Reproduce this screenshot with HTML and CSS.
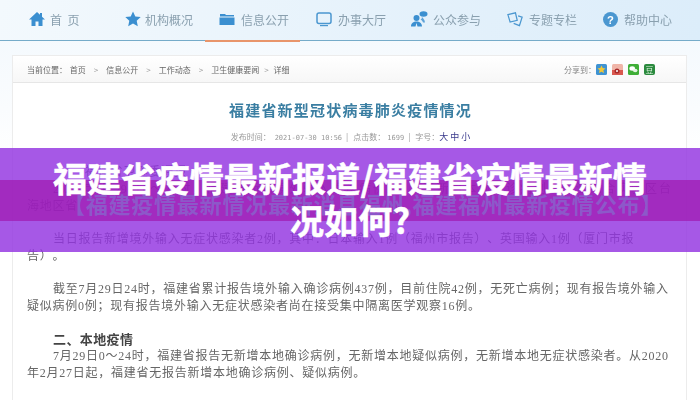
FILE: index.html
```html
<!DOCTYPE html>
<html lang="zh-CN">
<head>
    <meta charset="UTF-8">
    <title>福建省疫情最新报道</title>
    <link rel="stylesheet" href="styles.css">
</head>
<body>
    <div class="page">
        <nav class="nav">
            <a class="nav-item home">
                <svg viewBox="0 0 16 16" width="16" height="16"><path fill="#3b8fd0" d="M8 1 0 8.500h2.500V15h4v-4.500h3V15h4V8.500H16L13 5.700V2h-2v1.800z"/></svg>
                <span>首&nbsp;&nbsp;页</span>
            </a>
            <a class="nav-item org">
                <svg viewBox="0 0 16 16" width="16" height="16"><path fill="#3b8fd0" d="M8 .5l2.300 5 5.400.6-4 3.700 1.100 5.400L8 12.500l-4.800 2.700 1.100-5.400-4-3.700 5.400-.6z"/></svg>
                <span>机构概况</span>
            </a>
            <a class="nav-item info active">
                <svg viewBox="0 0 16 16" width="16" height="16"><path fill="#3b8fd0" d="M1 3h5l1 1h8v1.500H1zM.5 6.500h15v7.500H.5z"/></svg>
                <span>信息公开</span>
            </a>
            <a class="nav-item hall">
                <svg viewBox="0 0 16 16" width="16" height="16"><rect x="1" y="2" width="14" height="10.500" rx="2" fill="none" stroke="#4b97d0" stroke-width="1.500"/><path fill="#4b97d0" d="M4 14h8v1.200H4z"/></svg>
                <span>办事大厅</span>
            </a>
            <a class="nav-item public">
                <svg viewBox="0 0 18 16" width="18" height="16"><circle cx="6.500" cy="7" r="3" fill="#3b8fd0"/><path fill="#3b8fd0" d="M1 15.500c0-3.500 2.500-5 5.500-5s5.500 1.500 5.500 5H7.500L6.500 12l-1 3.500z"/><path fill="#3b8fd0" d="M10.500 8.500c1.500-.5 2-2.500.7-3.500 1 1.500 3.800 3.500 3.800 6.500h-2c-.5-1.500-1.200-2.500-2.500-3z" opacity=".8"/><ellipse cx="13.500" cy="3" rx="4" ry="2.800" fill="#3b8fd0"/></svg>
                <span>公众参与</span>
            </a>
            <a class="nav-item topic">
                <svg viewBox="0 0 18 16" width="16" height="16"><path fill="none" stroke="#4b97d0" stroke-width="1.400" d="M1 3 9.500 1l2 8.500-8 2z"/><path fill="none" stroke="#4b97d0" stroke-width="1.400" d="M12.500 4.500 17 6l-3 9.500-6.500-2.500"/></svg>
                <span>专题专栏</span>
            </a>
            <a class="nav-item help">
                <svg viewBox="0 0 16 16" width="15" height="15"><circle cx="8" cy="8" r="8" fill="#4b97d0"/><text x="8" y="12.500" class="help-mark">?</text></svg>
                <span>帮助中心</span>
            </a>
        </nav>

        <main class="card">
            <div class="crumbs">
                <div class="crumb-path">
                    <span class="crumb-label">当前位置&#65306;</span>
                    <span>首页</span><i>&gt;</i><span>信息公开</span><i>&gt;</i><span>工作动态</span><i>&gt;</i><span>卫生健康要闻</span><i class="tight">&gt;</i><span>详细</span>
                </div>
                <div class="share">
                    <span class="share-label">分享到&#65306;</span>
                    <svg class="share-icon" viewBox="0 0 11 11"><rect width="11" height="11" rx="1.500" fill="#3f93d2"/><path fill="#f2c735" d="M5.500 1.500l1.200 2.600 2.800.3-2.100 1.900.6 2.800-2.500-1.400-2.500 1.400.6-2.800L1.500 4.400l2.800-.3z"/></svg>
                    <svg class="share-icon" viewBox="0 0 11 11"><rect width="11" height="11" rx="1.500" fill="#f0b5a8"/><rect y="6" width="11" height="5" fill="#d9584f"/><circle cx="5" cy="7" r="2.500" fill="#a82a2a"/><circle cx="5" cy="7" r="1" fill="#fff"/></svg>
                    <svg class="share-icon" viewBox="0 0 11 11"><rect width="11" height="11" rx="1.500" fill="#3fae37"/><ellipse cx="4.200" cy="4.500" rx="2.800" ry="2.200" fill="#fff"/><ellipse cx="7.200" cy="6.500" rx="2.300" ry="1.800" fill="#e4f5e2"/></svg>
                    <b class="share-text">豆</b>
                </div>
            </div>
            <article class="article">
                <h1>福建省新型冠状病毒肺炎疫情情况</h1>
                <div class="meta">发布时间&#65306;<span class="num">2021-07-30 10:56</span>|<span class="meta-item">点击数&#65306;</span><span class="num short">1699</span>|<span class="meta-item">字号&#65306;</span><span class="sizes">大 中 小</span></div>
                <p class="lead">福建省卫健委通报</p>
                <p class="wrap">2021年7月29日0&#65374;24时&#65292;福建省新增境外输入确诊病例2例&#65292;无新增本地确诊病例&#65292;平潭综合实验区台</p>
                <p class="cont">海地区省</p>
                <p>当日报告新增境外输入无症状感染者2例&#65292;其中&#65306;日本输入1例&#65288;福州市报告&#65289;、英国输入1例&#65288;厦门市报告&#65289;。</p>
                <p class="gap">截至7月29日24时&#65292;福建省累计报告境外输入确诊病例437例&#65292;目前住院42例&#65292;无死亡病例&#65307;现有报告境外输入疑似病例0例&#65307;现有报告境外输入无症状感染者尚在接受集中隔离医学观察16例。</p>
                <h2>二、本地疫情</h2>
                <p>7月29日0&#65374;24时&#65292;福建省报告无新增本地确诊病例&#65292;无新增本地疑似病例&#65292;无新增本地无症状感染者。从2020年2月27日起&#65292;福建省无报告新增本地确诊病例、疑似病例。</p>
                <h2>&#65288;一&#65289;疫情趋势</h2>
            </article>
        </main>
    </div>

    <div class="banner">
        <div class="banner-band">【福建疫情最新情况最新消息福州,福建福州最新疫情公布】</div>
        <div class="banner-title">福建省疫情最新报道/福建省疫情最新情况如何?</div>
    </div>
</body>
</html>
```

FILE: styles.css
```css
* {
    box-sizing: border-box;
}

html, body {
    margin: 0;
    height: 400px;
    overflow: hidden;
}

body {
    position: relative;
    width: 700px;
    background: #fff;
}

.page {
    height: 400px;
    overflow: hidden;
    background: linear-gradient(#f1f8fd 0, #fafcfe 110px, #fff 160px);
    filter: blur(0.5px);
}

/* top nav */
.nav {
    display: flex;
    height: 41px;
    padding-left: 29px;
    background: linear-gradient(100deg, #f3f9fd, #e4f1fb 60%, #dcedfa);
    border-bottom: 1px solid #75abc9;
    font-family: "Noto Sans CJK SC", sans-serif;
    font-size: 12px;
    color: #8aa0af;
}

.nav-item {
    display: flex;
    align-items: center;
    gap: 6px;
    height: 41px;
    padding-bottom: 3px;
}

.home { width: 96px; gap: 5px; }
.org { width: 94px; gap: 4px; }
.info { width: 97px; }
.hall { width: 94px; }
.public { width: 97px; gap: 5px; }
.topic { width: 96px; }

.active {
    position: relative;
}

.active::after {
    content: "";
    position: absolute;
    left: -14px;
    width: 95px;
    bottom: -1px;
    height: 2px;
    background: #e8956b;
}

.help-mark {
    fill: #fff;
    font: bold 12px "Liberation Sans", sans-serif;
    text-anchor: middle;
}

/* article card */
.card {
    margin: 14px 13px 0 12px;
    background: #fff;
    border: 1px solid #ececec;
    height: 400px;
}

.crumbs {
    display: flex;
    justify-content: space-between;
    align-items: center;
    height: 27px;
    padding: 0 31px 0 14px;
    background: linear-gradient(#fff, #f7f7f7);
    border-bottom: 1px solid #e6e6e6;
    font-family: "Noto Sans CJK SC", sans-serif;
    font-size: 8px;
    color: #666;
}

.crumb-path i {
    font-style: normal;
    margin: 0 8px;
    color: #999;
}

.crumb-path i.tight {
    margin: 0 5px;
}

.crumb-label {
    margin-right: 1px;
}

.share {
    display: flex;
    align-items: center;
    gap: 5px;
    color: #888;
}

.share-label {
    margin-right: -5px;
}

.share-icon,
.share-text {
    display: block;
    width: 11px;
    height: 11px;
}

.share-text {
    border-radius: 2px;
    background: #2b8a3e;
    font-weight: normal;
    font-size: 8px;
    line-height: 11px;
    text-align: center;
    color: #dff3df;
}

.article {
    padding: 0 15px 0 14px;
    font-family: "Liberation Serif", "Noto Sans CJK SC", serif;
    font-size: 12px;
    line-height: 17px;
    letter-spacing: 0.75px;
    text-spacing-trim: space-all;
    color: #666;
}

.article h1 {
    margin: 16px -3px 0 0;
    font-family: "Noto Sans CJK SC", sans-serif;
    font-size: 15px;
    line-height: 22px;
    font-weight: 700;
    letter-spacing: 1.200px;
    text-align: center;
    color: #3a7ea2;
}

.meta {
    margin: 10px -3px 0 0;
    font-family: "Noto Sans CJK SC", sans-serif;
    font-size: 8px;
    line-height: 12px;
    letter-spacing: 0;
    text-align: center;
    color: #999;
}

.num {
    margin: 0 4px;
    font-family: "DejaVu Sans Mono", monospace;
    font-size: 7px;
}

.num.short {
    margin-left: 2px;
}

.meta-item {
    margin-left: 5px;
}

.sizes {
    font-size: 9px;
    color: #3a3a8c;
}

.article p {
    margin: 0;
    text-indent: 26px;
}

.article .lead {
    margin-top: 20px;
    padding-left: 32px;
}

.article .wrap {
    text-align: justify;
    text-align-last: justify;
    letter-spacing: 0;
}

.article .cont {
    text-indent: 0;
    margin-bottom: 16px;
}

.article .gap {
    margin-top: 16px;
}

.article h2 {
    margin: 16px 0 0 26px;
    font-size: 13px;
    line-height: 17px;
    letter-spacing: 0.4px;
    color: #444;
}

/* purple title over the page */
.banner {
    position: absolute;
    left: 0;
    top: 148px;
    width: 700px;
    height: 104px;
    background: rgba(147, 51, 224, 0.82);
}

.banner-band {
    position: absolute;
    left: 0;
    right: 0;
    top: 32px;
    height: 41px;
    padding: 10px 0 0 63px;
    background: rgba(160, 20, 170, 0.65);
    font-family: "Noto Sans CJK SC", sans-serif;
    font-size: 22px;
    line-height: 26px;
    font-weight: 700;
    letter-spacing: 0.77px;
    white-space: nowrap;
    color: rgba(138, 98, 203, 0.85);
    filter: blur(0.6px);
}

.banner-title {
    position: absolute;
    left: 50px;
    top: 9px;
    width: 600px;
    font-family: "Noto Sans CJK SC", sans-serif;
    font-size: 34px;
    line-height: 42px;
    font-weight: 700;
    letter-spacing: 0.15px;
    text-align: center;
    color: #fff;
    -webkit-text-stroke: 0.5px #fff;
}
```
